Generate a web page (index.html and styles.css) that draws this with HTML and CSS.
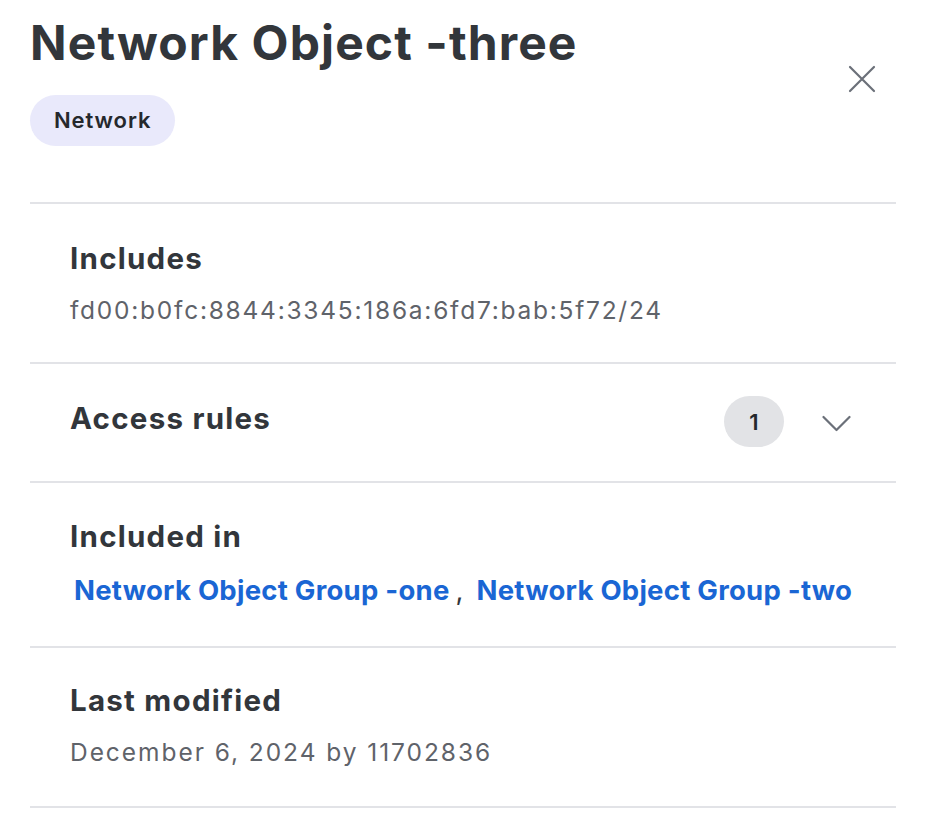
FILE: index.html
```html
<!DOCTYPE html>
<html>
<head>
<meta charset="utf-8">
<link rel="stylesheet" href="styles.css">
</head>
<body>
<div class="panel">
  <header class="head">
    <div class="head-main">
      <h1 class="title">Network Object -three</h1>
      <span class="tag">Network</span>
    </div>
    <button class="close" aria-label="Close">
      <svg width="28" height="28" viewBox="0 0 28 28"><path d="M2 2 L26 26 M26 2 L2 26" stroke="#6b7079" stroke-width="2.2" fill="none" stroke-linecap="round"/></svg>
    </button>
  </header>
  <section class="sec">
    <h2 class="label">Includes</h2>
    <div class="value">fd00:b0fc:8844:3345:186a:6fd7:bab:5f72/24</div>
  </section>
  <section class="sec sec-row">
    <h2 class="label">Access rules</h2>
    <div class="row-right">
      <span class="count">1</span>
      <svg class="chev" width="29" height="17" viewBox="0 0 29 17"><path d="M1.5 2 L14.5 15 L27.5 2" stroke="#6b7079" stroke-width="2.2" fill="none" stroke-linecap="round" stroke-linejoin="round"/></svg>
    </div>
  </section>
  <section class="sec sec-links">
    <h2 class="label">Included in</h2>
    <div class="links"><a class="link" href="#">Network Object Group -one</a><span class="comma">,</span><a class="link" href="#">Network Object Group -two</a></div>
  </section>
  <section class="sec sec-last">
    <h2 class="label">Last modified</h2>
    <div class="value value-date">December 6, 2024 by 11702836</div>
  </section>
</div>
</body>
</html>
```
FILE: styles.css
```css
html, body { margin: 0; padding: 0; background: #fff; }
body { font-family: Inter, "Noto Sans", sans-serif; color: #32363b; }
.panel { padding: 14px 38px 0 30px; }
.head { display: flex; justify-content: space-between; align-items: flex-start; padding-bottom: 56px; border-bottom: 2px solid #e2e3e7; }
.head-main { display: flex; flex-direction: column; align-items: flex-start; }
.title { margin: 0; font-size: 48px; font-weight: 700; line-height: 58px; letter-spacing: 1.1px; color: #32363b; }
.tag { margin-top: 23px; background: #e9e9fb; border-radius: 26px; padding: 0 24px; height: 51px; line-height: 51px; font-size: 22px; font-weight: 600; letter-spacing: 0.9px; color: #25282c; }
.close { margin: 51px 20px 0 0; padding: 0; border: 0; background: none; width: 28px; height: 28px; display: flex; }
.sec { padding: 34px 40px 34px; border-bottom: 2px solid #e2e3e7; }
.label { margin: 0; font-size: 29.5px; font-weight: 700; line-height: 40px; color: #32363b; letter-spacing: 1.25px; }
.value { margin-top: 14px; font-size: 24.5px; line-height: 36px; color: #5f636a; letter-spacing: 1.75px; white-space: nowrap; }
.value-date { letter-spacing: 1.95px; }
.sec-row { display: flex; justify-content: space-between; align-items: center; padding: 32px 45px 34px 40px; }
.sec-row .label { align-self: flex-start; margin-top: 2px; }
.row-right { display: flex; align-items: center; gap: 38px; }
.count { width: 60px; height: 51px; border-radius: 26px; background: #e2e3e6; display: flex; align-items: center; justify-content: center; font-size: 22px; font-weight: 600; color: #25282c; }
.chev { margin-top: 4px; }
.sec-links { padding: 33px 40px 38px; }
.links { margin-top: 16px; padding-left: 4px; display: flex; align-items: baseline; font-size: 27.5px; line-height: 36px; white-space: nowrap; }
.link { flex: none; color: #1a66d4; font-weight: 700; letter-spacing: 0.25px; text-decoration: none; }
.comma { flex: none; margin: 0 13px 0 6px; color: #32363b; font-weight: 400; }
.sec-last { padding: 32px 40px 36px; }
```
